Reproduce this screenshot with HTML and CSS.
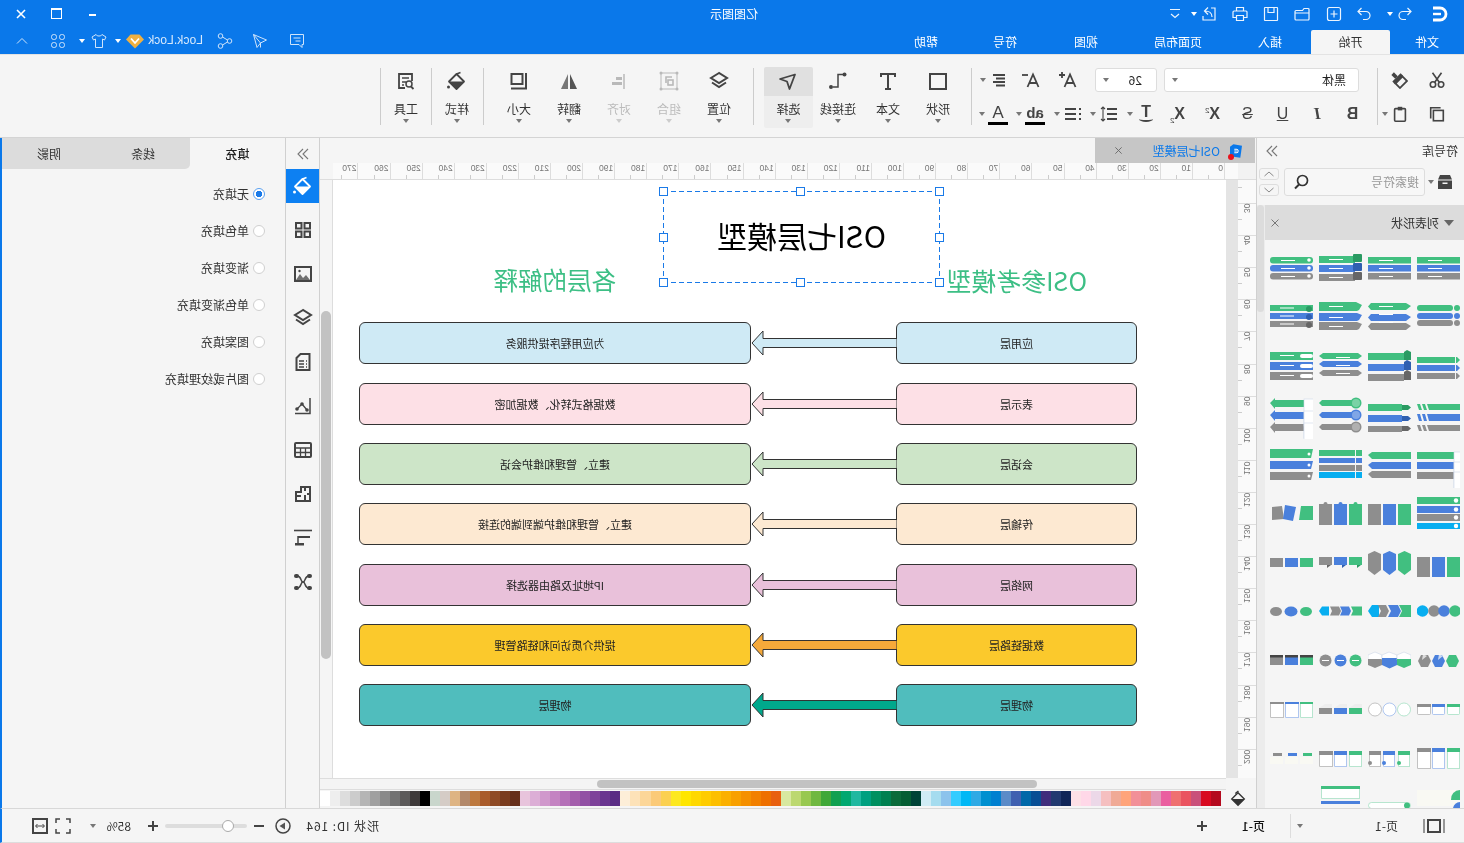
FILE: index.html
```html
<!DOCTYPE html>
<html lang="zh">
<head>
<meta charset="utf-8">
<title>亿图图示</title>
<link rel="stylesheet" href="styles.css">
</head>
<body>
<svg class="defs" aria-hidden="true">
  <symbol id="bucket" viewBox="0 0 20 20"><path d="M10.500 3 18 10.500 10.500 18 3 10.500z" fill="none" stroke="currentColor" stroke-width="1.800" stroke-linejoin="round"/><path d="M3 10.500h15L10.500 18z" fill="currentColor"/><path d="M6.500 1.500 10.500 3" stroke="currentColor" stroke-width="1.600"/><circle cx="18.500" cy="16" r="1.500" fill="currentColor"/></symbol>
  <symbol id="layers" viewBox="0 0 20 20"><path d="M10 2 18 7l-8 5-8-5z" fill="none" stroke="currentColor" stroke-width="2"/><path d="M3 11.500 10 16l7-4.500" fill="none" stroke="currentColor" stroke-width="2"/></symbol>
  <g id="bars"><rect class="g" y="14" width="43" height="6.500"/><rect class="b" y="22" width="43" height="6.500"/><rect class="k" y="30" width="43" height="6.500"/></g>
  <g id="pills"><rect class="g" y="14" width="43" height="6.500" rx="3"/><rect class="b" y="22" width="43" height="6.500" rx="3"/><rect class="k" y="30" width="43" height="6.500" rx="3"/></g>
  <g id="lines"><rect class="w" x="11" y="17" width="14" height="1"/><rect class="w" x="11" y="25" width="14" height="1"/><rect class="w" x="11" y="33" width="14" height="1"/></g>
  <g id="cols"><rect class="k" y="16" width="13" height="21"/><rect class="b" x="15" y="16" width="13" height="21"/><rect class="g" x="30" y="16" width="13" height="21"/></g>
</svg>

<div class="app">
  <header class="titlebar">
    <div class="title">亿图图示</div>
    <div class="qa">
      <svg class="qi ml16" viewBox="0 0 16 16"><path d="M15 2H8a6 6 0 0 0 0 12h7" fill="none" stroke="#fff" stroke-width="2.800"/><path d="M7 8h8" stroke="#fff" stroke-width="2.400"/></svg>
      <svg class="qi ml19" viewBox="0 0 16 16"><path d="M5.500 2 2 5.500 5.500 9M2 5.500h8a4 4 0 0 1 0 8H7" class="ws"/></svg>
      <i class="caret white ml4"></i>
      <svg class="qi ml15" viewBox="0 0 16 16"><path d="M10.500 2 14 5.500 10.500 9M14 5.500H6a4 4 0 0 0 0 8h3" class="ws"/></svg>
      <svg class="qi ml14" viewBox="0 0 16 16"><rect x="1.500" y="1.500" width="13" height="13" rx="2" class="ws"/><path d="M8 4.500v7M4.500 8h7" class="ws"/></svg>
      <svg class="qi ml16" viewBox="0 0 16 16"><path d="M1 13V3.500A1 1 0 0 1 2 2.500h4l1.500 2H14a1 1 0 0 1 1 1V13a1 1 0 0 1-1 1H2a1 1 0 0 1-1-1zM1 7h14" class="ws"/></svg>
      <svg class="qi ml15" viewBox="0 0 16 16"><path d="M2 1.500h12a.5.5 0 0 1 .5.5v12a.5.5 0 0 1-.5.5H2a.5.5 0 0 1-.5-.5V2a.5.5 0 0 1 .5-.5zM5 1.500v5h6v-5" class="ws"/></svg>
      <svg class="qi ml15" viewBox="0 0 16 16"><path d="M4.500 5V1.500h7V5M4 11.500H1V6a1 1 0 0 1 1-1h12a1 1 0 0 1 1 1v5.500h-3M4.500 9.500h7v5h-7z" class="ws"/></svg>
      <svg class="qi ml15" viewBox="0 0 16 16"><path d="M6 2H2v12h12v-4M5 11c0-4 3-6 7-6M9 1.500 12.500 5 9 8.500" class="ws"/></svg>
      <i class="caret white ml4"></i>
      <svg class="qs ml9" viewBox="0 0 14 14"><path d="M2 2.500h10M3 7l4 3.500L11 7" class="ws"/></svg>
    </div>
    <div class="winbtns">
      <span class="wb"><i class="min"></i></span>
      <span class="wb"><i class="max"></i></span>
      <span class="wb"><svg class="qs" viewBox="0 0 14 14"><path d="M3 3l8 8M11 3l-8 8" stroke="#fff" stroke-width="1.600"/></svg></span>
    </div>
  </header>
  <nav class="tabs">
    <span class="tab t74">文件</span>
    <span class="tab t79 active">开始</span>
    <span class="tab t82">插入</span>
    <span class="tab t102">页面布局</span>
    <span class="tab t82">视图</span>
    <span class="tab t80">符号</span>
    <span class="tab t78">帮助</span>
    <div class="user">
      <svg class="qi" viewBox="0 0 16 16"><path d="M1.500 1.500h13v10H6l-3 3v-3H1.500zM4.500 5h7M4.500 8h5" class="wsl"/></svg>
      <svg class="qi ml21" viewBox="0 0 16 16"><path d="M1.500 7 14.500 1.500 11 14.500 7.500 10zM7.500 10 14.500 1.500M7.500 10v4.500" class="wsl"/></svg>
      <svg class="qi ml19" viewBox="0 0 16 16"><circle cx="3.500" cy="8" r="2.300" class="wsl"/><circle cx="12.500" cy="3" r="2.300" class="wsl"/><circle cx="12.500" cy="13" r="2.300" class="wsl"/><path d="M5.500 7 10.500 4M5.500 9l5 3" class="wsl"/></svg>
      <span class="lock ml14">Lock.Lock</span>
      <svg class="gem ml3" viewBox="0 0 18 16"><path d="M4.500 1.500h9L18 6.500 9 15.500 0 6.500z" fill="#f0b040"/><path d="M5 5.500 9 10l4-4.500" fill="none" stroke="#fff" stroke-width="1.800"/></svg>
      <i class="caret white ml5"></i>
      <svg class="qi ml8" viewBox="0 0 16 16"><path d="M5 1.500 1 4l1.500 3L4.500 6v8.500h7V6l2 1L15 4l-4-2.500C10.500 3.500 5.500 3.500 5 1.500z" class="wsl"/></svg>
      <i class="caret white ml6"></i>
      <svg class="qi ml13" viewBox="0 0 16 16"><rect x="1.500" y="1.500" width="5" height="5" rx="2.200" class="wsl"/><rect x="9.500" y="1.500" width="5" height="5" rx="2.200" class="wsl"/><rect x="1.500" y="9.500" width="5" height="5" rx="2.200" class="wsl"/><rect x="9.500" y="9.500" width="5" height="5" rx="2.200" class="wsl"/></svg>
      <svg class="qc ml22" viewBox="0 0 12 12"><path d="M1 8.500 6 3.500l5 5" class="wsl"/></svg>
    </div>
  </nav>

  <section class="ribbon">
    <div class="clip">
      <div class="rrow">
        <svg class="ic ml18" viewBox="0 0 20 20"><circle cx="5.500" cy="15" r="3" class="ds"/><circle cx="14.500" cy="15" r="3" class="ds"/><path d="M7.500 12.500 15 2M12.500 12.500 5 2" class="ds"/></svg>
        <svg class="ic ml20" viewBox="0 0 20 20"><g transform="matrix(-1 0 0 1 20 0) rotate(-45 10 10)"><rect x="8" y="0" width="4" height="6" fill="#444"/><rect x="3.500" y="6" width="13" height="4" fill="#444"/><rect x="4.500" y="10" width="11" height="7" fill="none" stroke="#444" stroke-width="2"/></g></svg>
      </div>
      <div class="rrow">
        <svg class="ic ml18" viewBox="0 0 20 20"><path d="M6 3H17V15" class="ds"/><rect x="3" y="6" width="11" height="11.500" class="ds"/></svg>
        <svg class="ic ml19" viewBox="0 0 20 20"><rect x="4" y="4" width="12" height="14" rx="1" class="ds"/><rect x="7.500" y="2" width="5" height="4" fill="#444"/></svg>
        <i class="caret ml3"></i>
      </div>
    </div>
    <i class="rsep"></i>
    <div class="fontgrp">
      <div class="rrow row1">
        <div class="select w195"><span>黑体</span><i class="caret"></i></div>
        <div class="select w62 ml7"><span class="sz">26</span><i class="caret"></i></div>
        <svg class="ic ml17" viewBox="0 0 20 20"><path d="M2.500 17 8 4.500 13.500 17M4.500 13h7" class="ds"/><path d="M13 5h6M16 2v6" class="ds"/></svg>
        <svg class="ic ml17" viewBox="0 0 20 20"><path d="M2.500 17 8 4.500 13.500 17M4.500 13h7" class="ds"/><path d="M13 5h6" class="ds"/></svg>
        <svg class="ic ml12" viewBox="0 0 20 20"><path d="M4 5h12M4 8.500h9M4 12h12M4 15.500h9" class="ds"/></svg>
        <i class="caret ml3"></i>
      </div>
      <div class="rrow row2">
        <span class="fmt b">B</span>
        <span class="fmt i">I</span>
        <span class="fmt u">U</span>
        <span class="fmt s">S</span>
        <span class="fmt x">X<sup>2</sup></span>
        <span class="fmt x">X<sub>2</sub></span>
        <span class="ic2 ml4 t-arc">T</span>
        <i class="caret ml3"></i>
        <svg class="ic ml8" viewBox="0 0 20 20"><path d="M2 5h10M2 10h10M2 15h10" class="ds"/><path d="M16 3v14M14 5l2-2 2 2M14 15l2 2 2-2" class="ds1"/></svg>
        <i class="caret ml3"></i>
        <svg class="ic ml7" viewBox="0 0 20 20"><path d="M7 5h11M7 10h11M7 15h11" class="ds"/><path d="M2 5h2M2 10h2M2 15h2" class="ds"/></svg>
        <i class="caret ml3"></i>
        <span class="ic2 ml9 ab">ab</span>
        <i class="caret ml3"></i>
        <span class="ic2 ml8 fa">A</span>
        <i class="caret ml3"></i>
      </div>
    </div>
    <i class="rsep"></i>
    <div class="rb ml8"><svg class="big" viewBox="0 0 20 20"><rect x="2" y="3" width="16" height="15" fill="none" stroke="#444" stroke-width="2"/></svg><span>形状</span><i class="caret"></i></div>
    <div class="rb"><svg class="big" viewBox="0 0 20 20"><path d="M3 6V3h14v3M10 3v15M7 18h6" fill="none" stroke="#444" stroke-width="2"/></svg><span>文本</span><i class="caret"></i></div>
    <div class="rb"><svg class="big" viewBox="0 0 20 20"><circle cx="3.500" cy="3.500" r="2" fill="#444"/><circle cx="17" cy="16" r="2" fill="#444"/><path d="M5 3.500h5V16h5" fill="none" stroke="#444" stroke-width="1.500"/></svg><span>连接线</span><i class="caret"></i></div>
    <div class="rb on"><svg class="big" viewBox="0 0 20 20"><path d="M3 3.500 18 8l-7 2.500L8.500 18z" fill="none" stroke="#444" stroke-width="1.800" stroke-linejoin="round"/></svg><span>选择</span><i class="caret"></i></div>
    <i class="rsep ml9"></i>
    <div class="rb ml9"><svg class="big ink"><use href="#layers"/></svg><span>位置</span><i class="caret"></i></div>
    <div class="rb off"><svg class="big" viewBox="0 0 20 20"><rect x="2" y="2" width="16" height="16" fill="none" stroke="#999" stroke-width="1"/><path d="M7 6h6v6" fill="none" stroke="#999" stroke-width="1.600"/><rect x="6" y="9" width="5" height="5" fill="none" stroke="#999" stroke-width="1.600"/><circle cx="2" cy="2" r="1.500" fill="#999"/><circle cx="18" cy="2" r="1.500" fill="#999"/><circle cx="2" cy="18" r="1.500" fill="#999"/><circle cx="18" cy="18" r="1.500" fill="#999"/></svg><span>组合</span><i class="caret"></i></div>
    <div class="rb off"><svg class="big" viewBox="0 0 20 20"><path d="M5 3v15" stroke="#999" stroke-width="1.500"/><rect x="7" y="6" width="6" height="3" fill="#999"/><rect x="7" y="11" width="10" height="3" fill="#999"/></svg><span>对齐</span><i class="caret"></i></div>
    <div class="rb"><svg class="big" viewBox="0 0 20 20"><path d="M2 18h7V3z" fill="#555"/><path d="M11 3v15h7z" fill="#777"/></svg><span>翻转</span><i class="caret"></i></div>
    <div class="rb"><svg class="big" viewBox="0 0 20 20"><rect x="6.500" y="3" width="11" height="10" fill="none" stroke="#444" stroke-width="2"/><path d="M3 2v15.500h15" fill="none" stroke="#444" stroke-width="2"/></svg><span>大小</span><i class="caret"></i></div>
    <i class="rsep ml10"></i>
    <div class="rb ml1"><svg class="big ink"><use href="#bucket"/></svg><span>样式</span><i class="caret"></i></div>
    <i class="rsep"></i>
    <div class="rb"><svg class="big" viewBox="0 0 20 20"><path d="M4 10V3h13v14h-6" fill="none" stroke="#444" stroke-width="1.800"/><path d="M7 7h7M10 11h4M12 14h2" stroke="#444" stroke-width="1.500"/><circle cx="7" cy="13" r="3" fill="none" stroke="#444" stroke-width="1.500"/><path d="M5 15.500 2.500 18" stroke="#444" stroke-width="1.800"/></svg><span>工具</span><i class="caret"></i></div>
    <i class="rsep"></i>
  </section>

  <main class="work">
    <aside class="lib">
      <div class="libhead"><span>符号库</span><svg class="chev" viewBox="0 0 14 14"><path d="M2 2l5 5-5 5M7 2l5 5-5 5" fill="none" stroke="#777" stroke-width="1.100"/></svg></div>
      <div class="libsearch">
        <svg class="boxi" viewBox="0 0 16 16"><path d="M3 1h10l2 4.500H1z" fill="#444"/><path d="M1 6.500h14V15H1z" fill="#444"/><rect x="5.500" y="8.500" width="5" height="1.500" fill="#f5f5f5"/></svg>
        <i class="caret ml3"></i>
        <div class="search ml3"><span>搜索符号</span><svg class="mag" viewBox="0 0 16 16"><circle cx="6.500" cy="6.500" r="5" fill="none" stroke="#333" stroke-width="1.700"/><path d="M10 10.500 14 14.500" stroke="#333" stroke-width="2"/></svg></div>
        <div class="updown"><i class="ud"><svg viewBox="0 0 12 8"><path d="M1.500 6 6 2l4.500 4" fill="none" stroke="#888"/></svg></i><i class="ud"><svg viewBox="0 0 12 8"><path d="M1.500 2 6 6l4.500-4" fill="none" stroke="#888"/></svg></i></div>
      </div>
      <div class="libbody">
        <div class="libmain">
          <div class="sechead"><i class="tri"></i><span>列表形状</span><svg class="secx" viewBox="0 0 10 10"><path d="M1.500 1.500l7 7M8.500 1.500l-7 7" stroke="#777"/></svg></div>
          <div class="thumbs">
            <!-- row 1 -->
            <svg class="th" viewBox="0 0 43 49"><use href="#pills"/><use href="#lines"/><circle class="w" cx="39" cy="17" r="1.800"/><circle class="w" cx="39" cy="25" r="1.800"/><circle class="w" cx="39" cy="33" r="1.800"/></svg>
            <svg class="th" viewBox="0 0 43 49"><rect class="g" y="13" width="36" height="7"/><rect class="b" y="22" width="36" height="7"/><rect class="k" y="31" width="36" height="7"/><rect class="gd" x="34" y="11" width="9" height="8" rx="1"/><rect class="bd" x="34" y="20" width="9" height="8" rx="1"/><rect class="kd" x="34" y="29" width="9" height="8" rx="1"/><rect class="w" x="10" y="16" width="14" height="1"/><rect class="w" x="10" y="25" width="14" height="1"/><rect class="w" x="10" y="34" width="14" height="1"/></svg>
            <svg class="th" viewBox="0 0 43 49"><use href="#bars"/><use href="#lines"/></svg>
            <svg class="th" viewBox="0 0 43 49"><use href="#bars"/><use href="#lines"/></svg>
            <!-- row 2 -->
            <svg class="th" viewBox="0 0 43 49"><rect class="g" y="13" width="43" height="6"/><rect class="b" y="21" width="43" height="6"/><rect class="k" y="29" width="43" height="6"/><rect class="w" x="10" y="15.500" width="14" height="1"/><rect class="w" x="10" y="23.500" width="14" height="1"/><rect class="w" x="10" y="31.500" width="14" height="1"/><circle class="gd" cx="39" cy="17" r="3"/><circle class="bd" cx="39" cy="25" r="3"/><circle class="kd" cx="39" cy="33" r="3"/></svg>
            <svg class="th" viewBox="0 0 43 49"><path class="g" d="M0 10h37l6 3-3 5 -2 1H0z"/><path class="b" d="M0 21h38l5 2-3 5-2 1H0z"/><path class="k" d="M0 30h38l5 2-3 5-2 1H0z"/><rect class="w" x="10" y="14" width="14" height="1"/><rect class="w" x="10" y="25" width="14" height="1"/><rect class="w" x="10" y="34" width="14" height="1"/></svg>
            <svg class="th" viewBox="0 0 43 49"><path class="g" d="M3 11h35l5 3-5 4H3l-3-3.500z"/><path class="b" d="M3 22h35l5 3-5 4H3l-3-3.500z"/><path class="k" d="M3 31h35l5 3-5 4H3l-3-3.500z"/><use href="#lines" y="-3"/></svg>
            <svg class="th" viewBox="0 0 43 49"><rect class="g" y="13" width="36" height="6" rx="3"/><rect class="b" y="21" width="36" height="6" rx="3"/><rect class="k" y="28" width="36" height="6" rx="3"/><circle class="g" cx="40" cy="16" r="3"/><circle class="b" cx="40" cy="24" r="3"/><circle class="k" cx="40" cy="31" r="3"/></svg>
            <!-- row 3 -->
            <svg class="th" viewBox="0 0 43 49"><rect class="g" y="11" width="43" height="8"/><rect class="b" y="21" width="43" height="8"/><rect class="k" y="31" width="43" height="8"/><rect class="w" x="30" y="13" width="13" height="4" rx="2"/><rect class="w" x="30" y="23" width="13" height="4" rx="2"/><rect class="w" x="30" y="33" width="13" height="4" rx="2"/><rect class="w" x="10" y="14" width="14" height="1"/><rect class="w" x="10" y="24" width="14" height="1"/><rect class="w" x="10" y="34" width="14" height="1"/></svg>
            <svg class="th" viewBox="0 0 43 49"><path class="g" d="M0 15 4 12h35l4 3-4 3H4z"/><path class="b" d="M0 23l4-3h35l4 3-4 3H4z"/><path class="k" d="M0 32l4-3h35l4 3-4 3H4z"/><use href="#lines" x="6" y="-1"/></svg>
            <svg class="th" viewBox="0 0 43 49"><rect class="g" y="12" width="36" height="7"/><rect class="b" y="23" width="36" height="7"/><rect class="k" y="33" width="36" height="7"/><path class="gd" d="M36 11l3-2 4 2v8H36z"/><path class="bd" d="M36 21l3-2 4 2v8H36z"/><path class="kd" d="M36 31l3-2 4 2v8H36z"/></svg>
            <svg class="th" viewBox="0 0 43 49"><rect class="g" y="16" width="38" height="6"/><rect class="b" y="24" width="38" height="6"/><rect class="k" y="32" width="38" height="6"/><path class="g" d="M39 16h1l3 3-3 3h-1z"/><path class="b" d="M39 24h1l3 3-3 3h-1z"/><path class="k" d="M39 32h1l3 3-3 3h-1z"/></svg>
            <!-- row 4 -->
            <svg class="th" viewBox="0 0 43 49"><path class="g" d="M0 13 5 8v2h29v7H5v2z"/><path class="b" d="M0 25 5 20v2h29v7H5v2z"/><path class="k" d="M0 37 5 32v2h29v7H5v2z"/><rect class="wb" x="34" y="9" width="9" height="8"/><rect class="wb" x="34" y="21" width="9" height="8"/><rect class="wb" x="34" y="33" width="9" height="8"/></svg>
            <svg class="th" viewBox="0 0 43 49"><path class="g" d="M0 13l3-3h33v6H3z"/><path class="b" d="M0 25l3-3h33v6H3z"/><path class="k" d="M0 37l3-3h33v6H3z"/><circle class="g" cx="37" cy="13" r="5.500"/><circle class="b" cx="37" cy="25" r="5.500"/><circle class="k" cx="37" cy="37" r="5.500"/><circle class="w" cx="37" cy="13" r="4" opacity=".3"/><circle class="w" cx="37" cy="25" r="4" opacity=".3"/><circle class="w" cx="37" cy="37" r="4" opacity=".3"/></svg>
            <svg class="th" viewBox="0 0 43 49"><rect class="g" y="14" width="34" height="7"/><rect class="b" y="25" width="34" height="7"/><rect class="k" y="36" width="34" height="6"/><path class="gd" d="M34 15h6l3 2.500-3 2.500h-6z"/><path class="bd" d="M34 26h6l3 2.500-3 2.500h-6z"/><path class="kd" d="M34 36h6l3 2.500-3 2.500h-6z"/></svg>
            <svg class="th" viewBox="0 0 43 49"><path class="g" d="M10 14h33v6H12zM0 14h3l2 6H2zM5 14h3l2 6H7z"/><path class="b" d="M10 24h33v7H12zM0 24h3l2 7H2zM5 24h3l2 7H7z"/><path class="k" d="M10 35h33v6H12zM0 35h3l2 6H2zM5 35h3l2 6H7z"/></svg>
            <!-- row 5 -->
            <svg class="th" viewBox="0 0 43 49"><path class="g" d="M0 10h43l-2 9H0z"/><path class="b" d="M0 22h43l-2 8H0z"/><path class="k" d="M0 33h43l-2 8H0z"/><circle class="w" cx="39" cy="15" r="1.500"/><circle class="w" cx="39" cy="26" r="1.500"/><circle class="w" cx="39" cy="37" r="1.500"/></svg>
            <svg class="th" viewBox="0 0 43 49"><rect class="g" y="11" width="36" height="6"/><rect class="b" y="19" width="36" height="5"/><rect class="k" y="26" width="36" height="6"/><rect class="c" y="33" width="36" height="6"/><rect class="g" x="37" y="11" width="6" height="6"/><rect class="b" x="37" y="19" width="6" height="5"/><rect class="k" x="37" y="26" width="6" height="6"/><rect class="c" x="37" y="33" width="6" height="6"/></svg>
            <svg class="th" viewBox="0 0 43 49"><path class="g" d="M0 16l4-3h39v7H4z"/><path class="b" d="M0 26l4-3h39v7H4z"/><path class="k" d="M0 35l4-3h39v7H4z"/></svg>
            <svg class="th" viewBox="0 0 43 49"><rect class="g" y="13" width="37" height="7"/><rect class="b" y="23" width="37" height="7"/><rect class="k" y="33" width="37" height="7"/><rect class="wb" x="37" y="13" width="6" height="7"/><rect class="wb" x="37" y="23" width="6" height="7"/><rect class="wb" x="37" y="33" width="6" height="7"/></svg>
            <!-- row 6 -->
            <svg class="th" viewBox="0 0 43 49"><path class="k" d="M2 19l10-1 2 13-12 1z"/><path class="b" d="M15 17l11 2-3 14-10-2z"/><path class="g" d="M31 18h12v14H29z"/></svg>
            <svg class="th" viewBox="0 0 43 49"><use href="#cols"/><circle class="k" cx="6.500" cy="16" r="2"/><circle class="b" cx="21.500" cy="16" r="2"/><circle class="g" cx="36.500" cy="16" r="2"/></svg>
            <svg class="th" viewBox="0 0 43 49"><use href="#cols"/></svg>
            <svg class="th" viewBox="0 0 43 49"><rect class="g" y="9" width="43" height="7"/><rect class="b" y="18" width="43" height="7"/><rect class="k" y="26" width="43" height="7"/><rect class="c" y="35" width="43" height="6"/><circle class="w" cx="39" cy="12.500" r="2.200"/><circle class="w" cx="39" cy="21.500" r="2.200"/><circle class="w" cx="39" cy="29.500" r="2.200"/><circle class="w" cx="39" cy="38" r="2.200"/></svg>
            <!-- row 7 -->
            <svg class="th" viewBox="0 0 43 49"><rect class="k" y="21" width="13" height="9"/><rect class="b" x="15" y="21" width="13" height="9"/><rect class="g" x="30" y="21" width="13" height="9"/></svg>
            <svg class="th" viewBox="0 0 43 49"><rect class="k" y="20" width="13" height="8"/><rect class="b" x="15" y="20" width="13" height="8"/><rect class="g" x="30" y="20" width="13" height="8"/><path class="kd" d="M8 28h4l-4 3z"/><path class="bd" d="M23 28h4l-4 3z"/><path class="gd" d="M38 28h4l-4 3z"/></svg>
            <svg class="th" viewBox="0 0 43 49"><path class="k" d="M0 17l6.500-3L13 17v16l-6.500 5L0 33z"/><path class="b" d="M15 17l6.500-3L28 17v16l-6.500 5L15 33z"/><path class="g" d="M30 17l6.500-3L43 17v16l-6.500 5L30 33z"/></svg>
            <svg class="th" viewBox="0 0 43 49"><rect class="k" y="20" width="13" height="20"/><rect class="b" x="15" y="20" width="13" height="20"/><rect class="g" x="30" y="20" width="13" height="20"/></svg>
            <!-- row 8 -->
            <svg class="th" viewBox="0 0 43 49"><ellipse class="k" cx="6" cy="25.500" rx="6" ry="4.500"/><ellipse class="b" cx="21" cy="25.500" rx="6.500" ry="5"/><ellipse class="g" cx="36" cy="25.500" rx="6" ry="4.500"/></svg>
            <svg class="th" viewBox="0 0 43 49"><path class="c" d="M0 25l3-4.500h7v9H3z"/><path class="k" d="M11 20.500h9l2 4.500-2 4.500h-9l2-4.500z"/><path class="b" d="M21 20.500h9l2 4.500-2 4.500h-9l2-4.500z"/><path class="g" d="M32 20.500h11v9H32l2-4.500z"/></svg>
            <svg class="th" viewBox="0 0 43 49"><path class="c" d="M0 25l4-6h7v12H4z"/><path class="k" d="M10 19h8l3 6-3 6h-8l3-6z"/><path class="b" d="M20 19h10l3 6-3 6H20l3-6z"/><path class="g" d="M31 19h12v12H31l3-6z"/></svg>
            <svg class="th" viewBox="0 0 43 49"><circle class="c" cx="5.500" cy="25" r="5.800"/><circle class="k" cx="17" cy="25" r="5.800"/><circle class="b" cx="27" cy="25" r="5.800"/><circle class="g" cx="38" cy="25" r="5.800"/></svg>
            <!-- row 9 -->
            <svg class="th" viewBox="0 0 43 49"><rect class="k" y="20" width="13" height="10"/><rect class="b" x="15" y="20" width="13" height="10"/><rect class="g" x="30" y="20" width="13" height="10"/><rect class="dk" y="20" width="13" height="2.500"/><rect class="dk" x="15" y="20" width="13" height="2.500"/><rect class="dk" x="30" y="20" width="13" height="2.500"/></svg>
            <svg class="th" viewBox="0 0 43 49"><circle class="k" cx="6.500" cy="25.500" r="6"/><circle class="b" cx="21.500" cy="25.500" r="6"/><circle class="g" cx="36.500" cy="25.500" r="6"/><rect class="w" x="3" y="25" width="7" height="1"/><rect class="w" x="18" y="25" width="7" height="1"/><rect class="w" x="33" y="25" width="7" height="1"/></svg>
            <svg class="th" viewBox="0 0 43 49"><path class="wb" d="M7 17l7 3v5H0v-5z"/><path class="k" d="M0 24h14v6l-7 3-7-3z"/><path class="wb" d="M21 17l8 3v5H14v-5z"/><path class="b" d="M14 23h15v7l-7.500 3.500L14 30z"/><path class="wb" d="M36 17l7 3v5H29v-5z"/><path class="g" d="M29 24h14v6l-7 3-7-3z"/></svg>
            <svg class="th" viewBox="0 0 43 49"><path class="k" d="M4 20h7l3 6-3 6H4l-3-6z"/><path class="b" d="M18 20h7l3 6-3 6h-7l-3-6z"/><path class="g" d="M32 20h7l3 6-3 6h-7l-3-6z"/><path class="w" d="M6 19l4 2-5 4zM22 19l4 2-5 4z" opacity=".7"/></svg>
            <!-- row 10 -->
            <svg class="th" viewBox="0 0 43 49"><rect class="wk" x=".5" y="18.500" width="13" height="15"/><rect class="wbb" x="15.500" y="18.500" width="13" height="15"/><rect class="wg" x="30.500" y="18.500" width="12" height="15"/><rect class="k" y="18" width="14" height="2"/><rect class="b" x="15" y="18" width="14" height="2"/><rect class="g" x="30" y="18" width="13" height="2"/></svg>
            <svg class="th" viewBox="0 0 43 49"><rect class="k" y="24" width="13" height="6"/><rect class="b" x="15" y="24" width="13" height="6"/><rect class="g" x="30" y="24" width="13" height="6"/><path class="pale" d="M0 24l6-4h7v4zM15 24l6-4h7v4zM30 24l6-4h7v4z"/></svg>
            <svg class="th" viewBox="0 0 43 49"><circle class="wk" cx="7" cy="25.500" r="6.500"/><circle class="wbb" cx="21.500" cy="25.500" r="6.500"/><circle class="wg" cx="36" cy="25.500" r="6.500"/></svg>
            <svg class="th" viewBox="0 0 43 49"><rect class="wk" x=".5" y="20.500" width="13" height="10" rx="1"/><rect class="wbb" x="15.500" y="20.500" width="12" height="10" rx="1"/><rect class="wg" x="30.500" y="20.500" width="12" height="10" rx="1"/><rect class="k" y="20" width="14" height="3"/><rect class="b" x="15" y="20" width="13" height="3"/><rect class="g" x="30" y="20" width="13" height="3"/></svg>
            <!-- row 11 -->
            <svg class="th" viewBox="0 0 43 49"><rect class="pale2" y="24" width="13" height="7"/><rect class="pale2" x="15" y="24" width="13" height="7"/><rect class="pale2" x="30" y="24" width="13" height="7"/><rect class="k" x="3" y="20" width="9" height="3"/><rect class="b" x="18" y="20" width="9" height="3"/><rect class="g" x="33" y="20" width="9" height="3"/></svg>
            <svg class="th" viewBox="0 0 43 49"><rect class="wk" x=".5" y="18.500" width="13" height="15"/><rect class="wbb" x="15.500" y="18.500" width="12" height="15"/><rect class="wg" x="30.500" y="18.500" width="12" height="15"/><rect class="k" y="18" width="14" height="4"/><rect class="b" x="15" y="18" width="13" height="4"/><rect class="g" x="30" y="18" width="13" height="4"/></svg>
            <svg class="th" viewBox="0 0 43 49"><rect class="wk" x="1.500" y="18.500" width="11" height="15"/><rect class="wbb" x="15.500" y="18.500" width="11" height="15"/><rect class="wg" x="30.500" y="18.500" width="11" height="15"/><rect class="k" x="1" y="18" width="12" height="4"/><rect class="b" x="15" y="18" width="12" height="4"/><rect class="g" x="30" y="18" width="12" height="4"/><circle class="k" cx="2" cy="30" r="2"/><circle class="b" cx="16" cy="30" r="2"/><circle class="g" cx="31" cy="30" r="2"/></svg>
            <svg class="th" viewBox="0 0 43 49"><rect class="wk" x=".5" y="15.500" width="13" height="20"/><rect class="wbb" x="15.500" y="15.500" width="12" height="20"/><rect class="wg" x="30.500" y="15.500" width="12" height="20"/><rect class="k" y="15" width="14" height="4"/><rect class="b" x="15" y="15" width="13" height="4"/><rect class="g" x="30" y="15" width="13" height="4"/></svg>
            <!-- row 12 -->
            <svg class="th" viewBox="0 0 43 49"></svg>
            <svg class="th" viewBox="0 0 43 49"><rect class="wg" x="2.500" y="6.500" width="38" height="10"/><rect class="g" x="2" y="4" width="39" height="3"/><rect class="b" x="2" y="19" width="39" height="3"/></svg>
            <svg class="th" viewBox="0 0 43 49"><rect class="wg" x=".5" y="20.500" width="42" height="6" rx="3"/><circle class="g" cx="39" cy="23.500" r="3"/></svg>
            <svg class="th" viewBox="0 0 43 49"><rect class="pale2" y="8" width="43" height="16"/><path class="g" d="M43 8v10h-9a9 9 0 0 1 9-10z"/><path class="b" d="M43 20v6H36a8 8 0 0 1 7-6z"/></svg>
          </div>
        </div>
        <div class="libscroll"><i></i></div>
      </div>
    </aside>

    <section class="center">
      <div class="doctabs">
        <div class="doctab">
          <span class="docico"><svg viewBox="0 0 14 16"><path d="M0 2l10-2 4 3v11l-12 2z" fill="#0a78ea"/><path d="M9 6H6.500a2 2 0 0 0 0 4H9M6 8h3" fill="none" stroke="#fff" stroke-width="1.200"/></svg><i class="reddot"></i></span>
          <span class="docname">OSI七层模型</span>
          <svg class="docx" viewBox="0 0 10 10"><path d="M1.500 1.500l7 7M8.500 1.500l-7 7" stroke="#666"/></svg>
        </div>
      </div>
      <div class="sheet">
        <div class="corner"></div>
        <div class="hruler">
          <span>0</span><span>10</span><span>20</span><span>30</span><span>40</span><span>50</span><span>60</span><span>70</span><span>80</span><span>90</span><span>100</span><span>110</span><span>120</span><span>130</span><span>140</span><span>150</span><span>160</span><span>170</span><span>180</span><span>190</span><span>200</span><span>210</span><span>220</span><span>230</span><span>240</span><span>250</span><span>260</span><span>270</span>
        </div>
        <div class="cornerr"></div>
        <div class="vruler">
          <span></span><span><b>30</b></span><span><b>40</b></span><span><b>50</b></span><span><b>60</b></span><span><b>70</b></span><span><b>80</b></span><span><b>90</b></span><span><b>100</b></span><span><b>110</b></span><span><b>120</b></span><span><b>130</b></span><span><b>140</b></span><span><b>150</b></span><span><b>160</b></span><span><b>170</b></span><span><b>180</b></span><span><b>190</b></span><span><b>200</b></span>
        </div>
        <div class="vtrack"></div>
        <div class="canvas">
          <div class="heading ref">OSI参考模型</div>
          <div class="heading exp">各层的解释</div>
          <div class="selbox">
            <span class="maintitle">OSI七层模型</span>
            <i class="hd h1"></i><i class="hd h2"></i><i class="hd h3"></i><i class="hd h4"></i><i class="hd h5"></i><i class="hd h6"></i><i class="hd h7"></i><i class="hd h8"></i>
          </div>
          <div class="rows">
            <div class="row r1"><div class="node n1">应用层</div><svg class="arrow" viewBox="0 0 146 42"><path d="M0 16.500h134V9l11 12-11 12v-7.500H0z"/></svg><div class="node wide">为应用程序提供服务</div></div>
            <div class="row r2"><div class="node n1">表示层</div><svg class="arrow" viewBox="0 0 146 42"><path d="M0 16.500h134V9l11 12-11 12v-7.500H0z"/></svg><div class="node wide">数据格式转化、数据加密</div></div>
            <div class="row r3"><div class="node n1">会话层</div><svg class="arrow" viewBox="0 0 146 42"><path d="M0 16.500h134V9l11 12-11 12v-7.500H0z"/></svg><div class="node wide">建立、管理和维护会话</div></div>
            <div class="row r4"><div class="node n1">传输层</div><svg class="arrow" viewBox="0 0 146 42"><path d="M0 16.500h134V9l11 12-11 12v-7.500H0z"/></svg><div class="node wide">建立、管理和维护端到端的连接</div></div>
            <div class="row r5"><div class="node n1">网络层</div><svg class="arrow" viewBox="0 0 146 42"><path d="M0 16.500h134V9l11 12-11 12v-7.500H0z"/></svg><div class="node wide">IP地址及路由器选择</div></div>
            <div class="row r6"><div class="node n1">数据链路层</div><svg class="arrow" viewBox="0 0 146 42"><path d="M0 16.500h134V9l11 12-11 12v-7.500H0z"/></svg><div class="node wide">提供介质访问和链路管理</div></div>
            <div class="row r7"><div class="node n1">物理层</div><svg class="arrow" viewBox="0 0 146 42"><path d="M0 16.500h134V9l11 12-11 12v-7.500H0z"/></svg><div class="node wide">物理层</div></div>
          </div>
        </div>
        <div class="vbar"><i></i></div>
        <div class="hleft"></div>
        <div class="hbar"><i></i></div>
        <div class="fillcell"><svg viewBox="0 0 20 20"><path d="M10 3 17 10l-7 7-7-7z" fill="none" stroke="#333" stroke-width="1.500"/><path d="M3 10h14l-7 7z" fill="#333"/><path d="M9.500 1 13 4" stroke="#333" stroke-width="1.500"/></svg></div>
        <div class="palette">
          <i style="background:#ffffff"></i><i style="background:#eeeeee"></i><i style="background:#dddddd"></i><i style="background:#cccccc"></i><i style="background:#b5b5b5"></i><i style="background:#a0a0a0"></i><i style="background:#8a8a8a"></i><i style="background:#727272"></i><i style="background:#5c5a5a"></i><i style="background:#3f3a3a"></i>
          <i style="background:#000000"></i><i style="background:#c9d6cc"></i><i style="background:#d5ccc6"></i><i style="background:#deb483"></i><i style="background:#b3896b"></i><i style="background:#bd793f"></i><i style="background:#a95b2a"></i><i style="background:#8f4b26"></i><i style="background:#7a3c1e"></i><i style="background:#662f1a"></i>
          <i style="background:#e8c4dc"></i><i style="background:#dcaed6"></i><i style="background:#d098cc"></i><i style="background:#c483c2"></i><i style="background:#b570b8"></i><i style="background:#a45eac"></i><i style="background:#9250a4"></i><i style="background:#7e429a"></i><i style="background:#6a3590"></i><i style="background:#5a2c84"></i>
          <i style="background:#fdeed8"></i><i style="background:#fde2b8"></i><i style="background:#fcd698"></i><i style="background:#fbca78"></i><i style="background:#fbd050"></i><i style="background:#fde820"></i><i style="background:#ffe600"></i><i style="background:#ffd800"></i><i style="background:#ffcc00"></i><i style="background:#fdbf00"></i>
          <i style="background:#fbb000"></i><i style="background:#f8a000"></i><i style="background:#f59000"></i><i style="background:#f28000"></i><i style="background:#ee7000"></i><i style="background:#e86010"></i><i style="background:#d8e8a0"></i><i style="background:#bcd870"></i><i style="background:#98c850"></i><i style="background:#70b840"></i>
          <i style="background:#40a838"></i><i style="background:#10a050"></i><i style="background:#00a870"></i><i style="background:#20b8a0"></i><i style="background:#00a080"></i><i style="background:#009060"></i><i style="background:#008050"></i><i style="background:#0b6b3a"></i><i style="background:#055e33"></i><i style="background:#004337"></i>
          <i style="background:#d0ecf5"></i><i style="background:#a5dcef"></i><i style="background:#8cc3ec"></i><i style="background:#33ccff"></i><i style="background:#00b8f5"></i><i style="background:#2faae5"></i><i style="background:#0090d0"></i><i style="background:#0080d0"></i><i style="background:#5b8bc8"></i><i style="background:#4060b0"></i>
          <i style="background:#0068a8"></i><i style="background:#084e94"></i><i style="background:#402d7c"></i><i style="background:#223a70"></i><i style="background:#102658"></i><i style="background:#fde0e6"></i><i style="background:#ffd8e8"></i><i style="background:#ecd8e8"></i><i style="background:#f5bfc0"></i><i style="background:#f0aa96"></i>
          <i style="background:#ffa47a"></i><i style="background:#f29098"></i><i style="background:#ef8d88"></i><i style="background:#e298b8"></i><i style="background:#ea5fa0"></i><i style="background:#ef7070"></i><i style="background:#ea5460"></i><i style="background:#c9507a"></i><i style="background:#d80a20"></i><i style="background:#b40a1e"></i>
        </div>
      </div>
    </section>

    <div class="rail">
      <div class="railtop"><svg viewBox="0 0 14 14"><path d="M2 2l5 5-5 5M7 2l5 5-5 5" fill="none" stroke="#777" stroke-width="1.100"/></svg></div>
      <div class="railitem active"><svg><use href="#bucket"/></svg></div>
      <div class="railitem"><svg viewBox="0 0 20 20"><path d="M3 3h5.500v5.500H3zM11.500 3H17v5.500h-5.500zM3 11.500h5.500V17H3zM11.500 11.500H17V17h-5.500z" fill="none" stroke="#444" stroke-width="2"/></svg></div>
      <div class="railitem"><svg viewBox="0 0 20 20"><rect x="2" y="3" width="16" height="14" fill="none" stroke="#444" stroke-width="2"/><path d="M3 16l4-5 3 3 3-4 4 6z" fill="#444" opacity=".75"/><circle cx="13.500" cy="7" r="1.200" fill="#444"/></svg></div>
      <div class="railitem"><svg><use href="#layers"/></svg></div>
      <div class="railitem"><svg viewBox="0 0 20 20"><path d="M3.500 2h9l4 4v12h-13z" fill="none" stroke="#444" stroke-width="2"/><path d="M6 9h1M9 9h5M6 12h1M9 12h5M6 15h1M9 15h5" stroke="#444" stroke-width="1.500"/></svg></div>
      <div class="railitem"><svg viewBox="0 0 20 20"><path d="M3 2v15.500h15" fill="none" stroke="#444" stroke-width="1.500"/><path d="M6 14l5-6 5 5" fill="none" stroke="#444" stroke-width="1.300"/><circle cx="6" cy="14" r="1.800" fill="#444"/><circle cx="11" cy="8" r="1.800" fill="#444"/><circle cx="16" cy="13" r="1.800" fill="#444"/></svg></div>
      <div class="railitem"><svg viewBox="0 0 20 20"><rect x="2" y="3" width="16" height="14" rx="1" fill="none" stroke="#444" stroke-width="2"/><path d="M2 8h16M2 12.500h16M7.500 8v9M12.500 8v9" stroke="#444" stroke-width="1.300"/></svg></div>
      <div class="railitem"><svg viewBox="0 0 20 20"><g transform="matrix(-1 0 0 1 20 0)"><path d="M3 8h5V3h9v14H3z" fill="none" stroke="#444" stroke-width="2"/><path d="M12 3v4M12 11v6M3 12h5M14 10h3" stroke="#444" stroke-width="2"/></g></svg></div>
      <div class="railitem"><svg viewBox="0 0 20 20"><g transform="matrix(-1 0 0 1 20 0)"><path d="M1 2.500h18" stroke="#444" stroke-width="1.600"/><path d="M5 9h12" stroke="#444" stroke-width="2"/><path d="M5 8v7" stroke="#444" stroke-width="1.500"/><path d="M2 15h9v2.500H2z" fill="#444"/></g></svg></div>
      <div class="railitem"><svg viewBox="0 0 20 20"><path d="M4 4c5 0 3 6 6 6s1-6 6-6M4 16c5 0 3-6 6-6s1 6 6 6" fill="none" stroke="#444" stroke-width="1.500"/><rect x="1" y="2" width="5" height="4" rx="2" fill="#444"/><rect x="14" y="2" width="5" height="4" rx="2" fill="#444"/><rect x="1" y="14" width="5" height="4" rx="2" fill="#444"/><rect x="14" y="14" width="5" height="4" rx="2" fill="#444"/></svg></div>
    </div>

    <aside class="props">
      <div class="ptabs">
        <span class="ptab on">填充</span>
        <div class="ptabs-rest"><span class="ptab">线条</span><span class="ptab">阴影</span></div>
      </div>
      <ul class="radios">
        <li><i class="radio sel"></i>无填充</li>
        <li><i class="radio"></i>单色填充</li>
        <li><i class="radio"></i>渐变填充</li>
        <li><i class="radio"></i>单色渐变填充</li>
        <li><i class="radio"></i>图案填充</li>
        <li><i class="radio"></i>图片或纹理填充</li>
      </ul>
    </aside>
  </main>

  <footer class="status">
    <svg class="sfit ml19" viewBox="0 0 22 16"><path d="M1 1v14M21 1v14" stroke="#777" stroke-width="1.500"/><rect x="5" y="2" width="12" height="12" fill="none" stroke="#444" stroke-width="2"/></svg>
    <span class="page ml25">页-1</span>
    <i class="caret ml71"></i>
    <i class="ssep ml6"></i>
    <span class="page ml25 cur">页-1</span>
    <svg class="pm ml33" viewBox="0 0 12 12"><path d="M1 6h10M6 1v10" stroke="#444" stroke-width="2"/></svg>
    <span class="shapeid">形状 ID: 164</span>
    <svg class="sico ml15" viewBox="0 0 16 16"><circle cx="8" cy="8" r="7" fill="none" stroke="#444" stroke-width="1.500"/><path d="M6 4.500 11.500 8 6 11.500z" fill="#555"/></svg>
    <svg class="pm ml10" viewBox="0 0 12 12"><path d="M1 6h10" stroke="#444" stroke-width="2"/></svg>
    <div class="slider ml6"><i></i></div>
    <svg class="pm ml6" viewBox="0 0 12 12"><path d="M1 6h10M6 1v10" stroke="#444" stroke-width="2"/></svg>
    <span class="pct ml16">85%</span>
    <i class="caret ml10"></i>
    <svg class="sico ml19" viewBox="0 0 16 16"><path d="M1 5V1h4M11 1h4v4M15 11v4h-4M5 15H1v-4" fill="none" stroke="#444" stroke-width="1.500"/></svg>
    <svg class="sico ml7" viewBox="0 0 16 16"><rect x="1" y="1" width="14" height="14" fill="none" stroke="#444" stroke-width="2"/><path d="M4 8h8M5.500 6 3.500 8l2 2M10.500 6l2 2-2 2" fill="none" stroke="#444"/></svg>
  </footer>
</div>
</body>
</html>
```
FILE: styles.css
```css
html,body{margin:0;padding:0;overflow:hidden;background:#f5f5f5}
body{font:12px/16px "Noto Sans CJK SC","Liberation Sans",sans-serif;color:#333}
i{font-style:normal;display:block}
.defs{position:absolute;width:0;height:0;overflow:hidden}
.app{width:1464px;height:843px;transform:scaleX(-1);display:flex;flex-direction:column;overflow:hidden;position:relative;box-sizing:border-box}
.ml1{margin-left:1px}.ml3{margin-left:3px}.ml4{margin-left:4px}.ml5{margin-left:5px}.ml6{margin-left:6px}.ml7{margin-left:7px}.ml8{margin-left:8px}.ml9{margin-left:9px}
.ml10{margin-left:10px}.ml12{margin-left:12px}.ml13{margin-left:13px}.ml14{margin-left:14px}.ml15{margin-left:15px}.ml16{margin-left:16px}.ml17{margin-left:17px}
.ml18{margin-left:18px}.ml19{margin-left:19px}.ml20{margin-left:20px}.ml21{margin-left:21px}.ml22{margin-left:22px}.ml25{margin-left:25px}.ml33{margin-left:33px}.ml71{margin-left:71px}
.caret{width:0;height:0;border:3px solid transparent;border-top:4px solid #777;border-bottom:0;flex:none}
.caret.white{border-top-color:#fff}

/* title bar */
.titlebar{height:27px;background:#0a78ea;display:flex;align-items:center;position:relative;color:#fff;flex:none}
.title{position:absolute;left:0;right:4px;top:6px;text-align:center;font-size:12px;color:#fff}
.qa{display:flex;align-items:center}
.qi{width:16px;height:16px;flex:none;display:block}
.gem{width:18px;height:16px;flex:none;display:block}
.qs{width:14px;height:14px;display:block;flex:none}
.qc{width:12px;height:12px;display:block;flex:none}
.ws{fill:none;stroke:#fff;stroke-width:1.200;opacity:.92}
.wsl{fill:none;stroke:#cfe4fb;stroke-width:1}
.winbtns{margin-left:auto;display:flex;margin-right:3px}
.wb{width:36px;height:27px;display:flex;align-items:center;justify-content:center}
.min{width:7px;height:2px;background:#fff;margin-top:2px}
.max{width:9px;height:8px;border:1px solid #fff;border-top-width:2px}

/* tabs */
.tabs{height:27px;background:#0a78ea;display:flex;color:#fff;flex:none;line-height:27px}
.tab{display:block;text-align:center;flex:none;padding-top:1px;box-sizing:border-box}
.t74{width:74px}.t79{width:79px}.t82{width:82px}.t102{width:102px}.t80{width:80px}.t78{width:78px}
.tab.active{background:#f5f5f5;color:#333;border-radius:2px 2px 0 0;margin-top:3px;line-height:24px;padding-top:0}
.user{margin-left:auto;display:flex;align-items:center;padding-right:16px}
.lock{width:56px;font-size:12px;color:#d8e9fc;letter-spacing:.1px;white-space:nowrap;font-family:"Liberation Sans",sans-serif}

/* ribbon */
.ribbon{height:84px;background:#f5f5f5;border-bottom:1px solid #d4d4d4;box-sizing:border-box;display:flex;flex:none;border-top:1px solid #e3e3e3}
.rsep{width:1px;height:57px;margin-top:13px;background:#ccc;flex:none}
.clip{width:86px;flex:none;padding-top:13px;box-sizing:border-box}
.rrow{display:flex;align-items:center;height:24px}
.clip .rrow+.rrow,.row2{margin-top:10px}
.ic{width:20px;height:20px;flex:none;display:block}
.clip .ic{width:18px;height:18px}
.ds{fill:none;stroke:#444;stroke-width:1.800}
.ds1{fill:none;stroke:#444;stroke-width:1.100}
.fontgrp{width:405px;flex:none;padding-top:13px;box-sizing:border-box}
.row1{padding-left:18px}
.row2{padding-left:7px}
.select{height:24px;box-sizing:border-box;background:#fff;border:1px solid #ddd;border-radius:3px;display:flex;align-items:center;justify-content:space-between;padding:0 7px 0 12px;flex:none;font-size:12px;color:#222}
.w195{width:195px}
.w62{width:62px;padding-left:14px}
.sz{font-size:12px}
.fmt{width:35px;text-align:center;flex:none;font:16px/24px "Liberation Sans",sans-serif;color:#444}
.fmt.b{font-weight:700}
.fmt.i{font:italic 700 17px/24px "Liberation Serif",serif}
.fmt.u{text-decoration:underline}
.fmt.s{text-decoration:line-through}
.fmt.x{font-weight:700}
.fmt sup,.fmt sub{font-size:8px;line-height:0;font-weight:400}
.ic2{width:20px;flex:none;text-align:center;font:15px/24px "Liberation Sans",sans-serif;color:#444;position:relative}
.t-arc{font-weight:700;font-size:16px;line-height:20px;height:24px}
.t-arc::after{content:"";position:absolute;left:3px;top:14px;width:14px;height:6px;box-sizing:border-box;border-bottom:2px solid #444;border-radius:50%}
.ab{font-size:15px;line-height:17px;border-bottom:3px solid #000;height:18px;font-weight:700}
.fa{font-size:17px;line-height:17px;border-bottom:3px solid #000;height:18px}
.rb{width:50px;flex:none;height:61px;margin-top:12px;padding-top:4px;box-sizing:border-box;display:flex;flex-direction:column;align-items:center;color:#333}
.rb span{line-height:16px;margin-top:10px;white-space:nowrap}
.rb .caret{margin-top:2px}
.rb.on{background:linear-gradient(#e0e0e0 29px,#eee 29px);border-radius:2px;width:49px;margin-right:1px}
.rb.off{color:#bbb}
.rb.off .big{opacity:.65}
.rb.off .caret{border-top-color:#ccc}
.big{width:20px;height:20px;flex:none;display:block}
.ink{color:#444}

/* work area */
.work{flex:1;display:flex;min-height:0}
.lib{width:208px;flex:none;box-sizing:border-box;border-right:1px solid #d0d0d0;display:flex;flex-direction:column;background:#f5f5f5}
.libhead{height:25px;display:flex;align-items:center;justify-content:space-between;padding:0 8px 0 6px;flex:none;font-size:12px;color:#333}
.chev{width:14px;height:14px;display:block}
.libsearch{height:28px;margin-top:5px;display:flex;align-items:center;padding-left:11px;flex:none}
.boxi{width:16px;height:16px;display:block;flex:none}
.search{width:141px;height:28px;box-sizing:border-box;border:1px solid #ddd;border-radius:3px;display:flex;align-items:center;justify-content:space-between;padding:0 8px 0 5px;color:#999;font-size:12px;background:#f7f7f7}
.mag{width:16px;height:16px;display:block}
.updown{margin-left:5px;display:flex;flex-direction:column;gap:4px}
.ud{display:flex;width:20px;height:12px;box-sizing:border-box;border:1px solid #ddd;border-radius:3px;align-items:center;justify-content:center}
.ud svg{width:12px;height:8px;display:block}
.libbody{margin-top:9px;flex:1;display:flex;min-height:0}
.libmain{width:199px;flex:none;display:flex;flex-direction:column;min-height:0}
.sechead{height:35px;background:#dcdcdc;display:flex;align-items:center;padding:0 0 0 10px;flex:none;color:#333}
.tri{width:0;height:0;border:5px solid transparent;border-top:6px solid #666;border-bottom:0;margin-right:5px}
.secx{width:10px;height:10px;display:block;margin-left:auto;margin-right:5px}
.thumbs{flex:1;min-height:0;overflow:hidden;display:grid;direction:rtl;grid-template-columns:repeat(4,43px);grid-auto-rows:49px;column-gap:6px;padding:3px 5px 0 4px;box-sizing:border-box}
.th{display:block;width:43px;height:49px;transform:scaleX(-1);filter:blur(.5px)}
.g{fill:#41bf80}.b{fill:#4a80dc}.k{fill:#8e8e8e}.c{fill:#08aef0}.w{fill:#fff}
.gd{fill:#2a9a62}.bd{fill:#2f5fb0}.kd{fill:#666}.dk{fill:#444}
.wb{fill:#fff;stroke:#ccd6e8;stroke-width:.6}
.wk{fill:#fff;stroke:#aaa;stroke-width:.7}.wbb{fill:#fff;stroke:#8fb0ea;stroke-width:.7}.wg{fill:#fff;stroke:#9adcbc;stroke-width:.7}
.pale{fill:#eee}.pale2{fill:#f9f9f3}
.libscroll{width:8px;flex:none;background:#ececec}
.libscroll i{width:7px;height:107px;margin-left:1px;background:#dcdcdc;border-radius:4px}

.center{width:936px;flex:none;display:flex;flex-direction:column;background:#f5f5f5}
.doctabs{height:25px;flex:none;background:#f5f5f5}
.doctab{width:160px;height:25px;background:#c6c6c6;display:flex;align-items:center;margin-left:1px;position:relative}
.docico{width:12px;height:14px;margin-left:13px;position:relative;display:block}
.docico svg{width:12px;height:14px;display:block}
.reddot{position:absolute;right:-2px;bottom:-2px;width:6px;height:6px;border-radius:50%;background:#e8121c}
.docname{margin-left:10px;color:#0a78ea;font-size:12px;white-space:nowrap}
.docx{width:9px;height:9px;margin-left:auto;margin-right:19px;display:block}
.sheet{flex:1;display:grid;grid-template-columns:18px 12px 893px 13px;grid-template-rows:17px 598px 12px 18px;min-height:0}
.corner{background:#f2f2f2;border-bottom:1px solid #ddd;box-sizing:border-box}
.hruler{grid-column:2/4;background:#fafafa;border-bottom:1px solid #ddd;box-sizing:border-box;display:flex;padding-left:13px;overflow:hidden;width:905px}
.hruler span{flex:none;width:32.100px;box-sizing:border-box;border-left:1px solid #ddd;font:8.500px/11px "Liberation Sans",sans-serif;color:#777;padding-left:1px;position:relative}
.hruler span::after{content:"";position:absolute;left:15px;bottom:0;height:4px;width:1px;background:#ccc}
.cornerr{background:#f5f5f5;border-bottom:1px solid #ddd}
.vruler{background:#fafafa;overflow:hidden;grid-row:2/3}
.vruler span{display:flex;height:32.100px;box-sizing:border-box;border-top:1px solid #ddd;position:relative;justify-content:flex-start;padding-left:4px;font:8.500px/10px "Liberation Sans",sans-serif;color:#777}
.vruler span:first-child{margin-top:-9px}
.vruler span::after{content:"";position:absolute;right:0;top:15px;width:4px;height:1px;background:#ccc}
.vruler b{font-weight:400;writing-mode:vertical-rl;transform:rotate(180deg);height:14px;text-align:right}
.vtrack{background:#e4e4e4}
.canvas{background:#fff;position:relative;overflow:hidden}
.vbar{background:#f5f5f5;border-left:1px solid #ddd;box-sizing:border-box}
.vbar i{width:10px;height:348px;margin:131px 0 0 1px;background:#c2c2c2;border-radius:5px}
.hleft{grid-column:1/3;background:#f5f5f5}
.hbar{grid-column:3/5;background:#f4f4f4;border-top:1px solid #ddd;border-bottom:1px solid #ddd;box-sizing:border-box;padding-top:1px}
.hbar i{width:440px;height:8px;margin-left:189px;background:#c2c2c2;border-radius:4px}
.fillcell{grid-column:1/3;display:flex;align-items:center;justify-content:flex-start;padding-left:9px}
.fillcell svg{width:18px;height:18px;display:block}
.palette{grid-column:3/5;display:flex;flex-direction:row-reverse;padding-top:1px;box-sizing:border-box}
.palette i{width:10.030px;height:15px;flex:none}

/* diagram */
.heading{position:absolute;color:#3dbf85;font-size:25px;line-height:30px;white-space:nowrap}
.ref{left:139px;top:85px}
.exp{left:610px;top:85px;font-size:24.500px}
.selbox{position:absolute;left:286px;top:11px;width:277px;height:92px;box-sizing:border-box;padding-bottom:4px;display:flex;align-items:center;justify-content:center;
  background:
    linear-gradient(90deg,#1a7ae8 5px,transparent 5px) 0 0/8px 1px repeat-x,
    linear-gradient(90deg,#1a7ae8 5px,transparent 5px) 0 100%/8px 1px repeat-x,
    linear-gradient(#1a7ae8 5px,transparent 5px) 0 0/1px 8px repeat-y,
    linear-gradient(#1a7ae8 5px,transparent 5px) 100% 0/1px 8px repeat-y}
.maintitle{font-size:30px;line-height:36px;color:#000;white-space:nowrap}
.hd{position:absolute;width:9px;height:9px;box-sizing:border-box;border:1px solid #1a7ae8;background:#fff}
.h1{left:-4px;top:-4px}.h2{left:50%;margin-left:-4px;top:-4px}.h3{right:-4px;top:-4px}
.h4{left:-4px;top:50%;margin-top:-4px}.h5{right:-4px;top:50%;margin-top:-4px}
.h6{left:-4px;bottom:-4px}.h7{left:50%;margin-left:-4px;bottom:-4px}.h8{right:-4px;bottom:-4px}
.rows{position:absolute;left:89px;top:142.400px;display:flex;flex-direction:column;gap:18.330px}
.row{display:flex;height:42px}
.node{width:241px;height:42px;box-sizing:border-box;border:1px solid #333;border-radius:6px;display:flex;align-items:center;justify-content:center;font-size:11px;color:#222;flex:none}
.node.wide{width:392px}
.arrow{width:146px;height:42px;flex:none;margin-left:-1px;display:block;fill:var(--c);stroke:#333;stroke-width:1}
.r1 .node{background:#cfeaf5}.r1{--c:#cfeaf5}
.r2 .node{background:#fde0e6}.r2{--c:#fde0e6}
.r3 .node{background:#cde5c8}.r3{--c:#cde5c8}
.r4 .node{background:#fde9d2}.r4{--c:#fde9d2}
.r5 .node{background:#e9c1da}.r5{--c:#e9c1da}
.r6 .node{background:#fbc92c}.r6{--c:#f5a93a}
.r7 .node{background:#50bdbd}.r7{--c:#00a88c}

/* tool rail */
.rail{width:35px;flex:none;box-sizing:border-box;border-left:1px solid #d0d0d0;border-right:1px solid #d0d0d0;background:#f5f5f5}
.railtop{height:31px;display:flex;align-items:center;justify-content:center;padding-right:1px}
.railtop svg{width:14px;height:14px;display:block}
.railitem{height:34px;margin-bottom:10px;display:flex;align-items:center;justify-content:center;color:#444;padding-right:1px}
.railitem svg{width:20px;height:20px;display:block}
.railitem.active{background:#0d80f2;color:#fff}

/* properties */
.props{width:285px;flex:none;box-sizing:border-box;border-right:2px solid #0a78ea;background:#f5f5f5}
.ptabs{height:31px;display:flex}
.ptab{width:94px;text-align:center;line-height:31px;display:block;flex:none;color:#333}
.ptab.on{width:95px;font-weight:500;color:#222}
.ptabs-rest{flex:1;display:flex;background:#dcdcdc;border-bottom-left-radius:5px}
.radios{list-style:none;margin:0;padding:6px 0 0 20px}
.radios li{height:37px;display:flex;align-items:center;color:#333}
.radio{width:12px;height:12px;box-sizing:border-box;border:1px solid #d0d0d0;border-radius:50%;background:#fff;flex:none;margin-right:4px}
.radio.sel{border-color:#5aa0f0;background:radial-gradient(circle,#1a7ae8 0 3px,#fff 3.500px)}

/* status bar */
.status{height:35px;flex:none;box-sizing:border-box;border-top:1px solid #d8d8d8;border-bottom:1px solid #ddd;border-right:2px solid #0a78ea;background:#f5f5f5;display:flex;align-items:center;position:relative}
.sfit{width:22px;height:16px;display:block;flex:none}
.page{width:24px;white-space:nowrap;color:#333}
.page.cur{font-weight:500;color:#111}
.ssep{width:1px;height:24px;background:#ddd}
.pm{width:12px;height:12px;display:block;flex:none}
.shapeid{margin-left:auto;font-size:12px;white-space:nowrap;width:73px;letter-spacing:.9px}
.sico{width:16px;height:16px;display:block;flex:none}
.slider{width:82px;height:4px;background:#ddd;border-radius:2px;position:relative;flex:none}
.slider i{position:absolute;left:13px;top:-4px;width:12px;height:12px;box-sizing:border-box;border:1px solid #aaa;border-radius:50%;background:#fff}
.pct{width:25px;font-size:12px;white-space:nowrap}
.status>svg:last-child{margin-right:30px}
```
